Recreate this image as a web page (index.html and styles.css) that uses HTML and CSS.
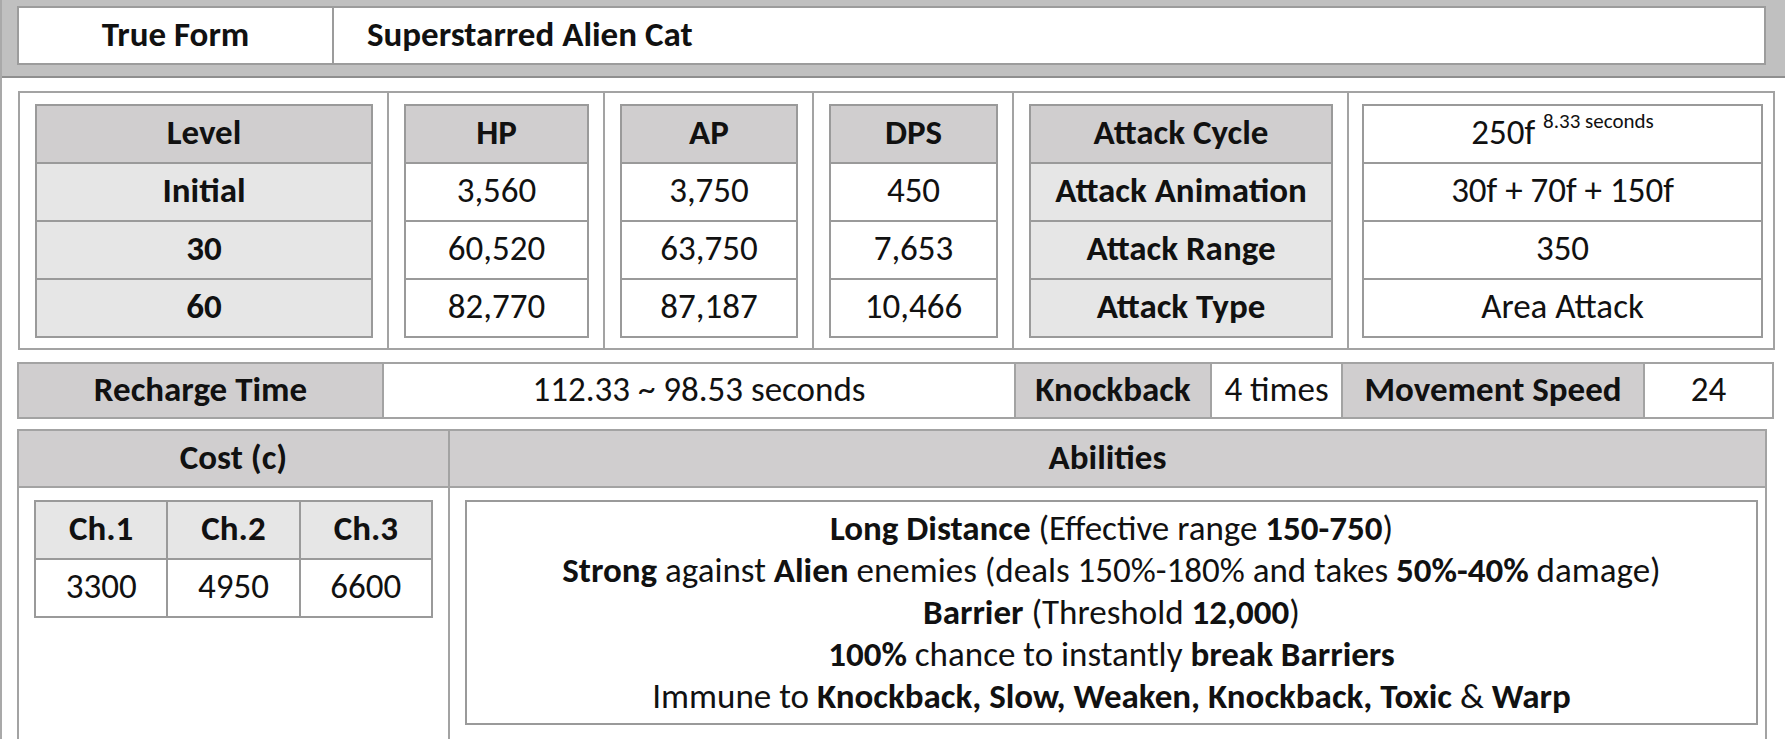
FILE: index.html
```html
<!DOCTYPE html>
<html lang="en">
<head>
<meta charset="utf-8">
<title>Superstarred Alien Cat</title>
<link rel="stylesheet" href="styles.css">
</head>
<body>
<div class="page">
  <div class="topbar">
    <div class="title-box">
      <div class="title-label">True Form</div>
      <div class="title-name">Superstarred Alien Cat</div>
    </div>
  </div>

  <div class="stats">
    <div class="stat-col c1">
      <table class="grid">
        <tr><th class="hd">Level</th></tr>
        <tr><th class="lt">Initial</th></tr>
        <tr><th class="lt">30</th></tr>
        <tr><th class="lt">60</th></tr>
      </table>
    </div>
    <div class="stat-col c2">
      <table class="grid">
        <tr><th class="hd">HP</th></tr>
        <tr><td>3,560</td></tr>
        <tr><td>60,520</td></tr>
        <tr><td>82,770</td></tr>
      </table>
    </div>
    <div class="stat-col c3">
      <table class="grid">
        <tr><th class="hd">AP</th></tr>
        <tr><td>3,750</td></tr>
        <tr><td>63,750</td></tr>
        <tr><td>87,187</td></tr>
      </table>
    </div>
    <div class="stat-col c4">
      <table class="grid">
        <tr><th class="hd">DPS</th></tr>
        <tr><td>450</td></tr>
        <tr><td>7,653</td></tr>
        <tr><td>10,466</td></tr>
      </table>
    </div>
    <div class="stat-col c5">
      <table class="grid">
        <tr><th class="hd">Attack Cycle</th></tr>
        <tr><th class="lt">Attack Animation</th></tr>
        <tr><th class="lt">Attack Range</th></tr>
        <tr><th class="lt">Attack Type</th></tr>
      </table>
    </div>
    <div class="stat-col c6">
      <table class="grid">
        <tr><td>250f <sup class="secs">8.33 seconds</sup></td></tr>
        <tr><td>30f + 70f + 150f</td></tr>
        <tr><td>350</td></tr>
        <tr><td>Area Attack</td></tr>
      </table>
    </div>
  </div>

  <table class="recharge">
    <tr>
      <th class="hd r1">Recharge Time</th>
      <td class="r2">112.33 ~ 98.53 seconds</td>
      <th class="hd r3">Knockback</th>
      <td class="r4">4 times</td>
      <th class="hd r5">Movement Speed</th>
      <td class="r6">24</td>
    </tr>
  </table>

  <table class="lower">
    <tr>
      <th class="hd cost-h">Cost (c)</th>
      <th class="hd abil-h">Abilities</th>
    </tr>
    <tr>
      <td class="cost-b">
        <table class="grid chapters">
          <tr><th class="lt">Ch.1</th><th class="lt">Ch.2</th><th class="lt">Ch.3</th></tr>
          <tr><td>3300</td><td>4950</td><td>6600</td></tr>
        </table>
      </td>
      <td class="abil-b">
        <div class="abil-box">
          <div class="line"><b>Long Distance</b> (Effective range <b>150-750</b>)</div>
          <div class="line"><b>Strong</b> against <b>Alien</b> enemies (deals 150%-180% and takes <b>50%-40%</b> damage)</div>
          <div class="line"><b>Barrier</b> (Threshold <b>12,000</b>)</div>
          <div class="line"><b>100%</b> chance to instantly <b>break Barriers</b></div>
          <div class="line">Immune to <b>Knockback, Slow, Weaken, Knockback, Toxic</b> &amp; <b>Warp</b></div>
        </div>
      </td>
    </tr>
  </table>
</div>
</body>
</html>
```

FILE: styles.css
```css
html, body {
  margin: 0;
  padding: 0;
  overflow: hidden;
  background: #ffffff;
}

body {
  font-family: Carlito, Calibri, Lato, "Liberation Sans", sans-serif;
  font-size: 35px;
  color: #111111;
  width: 1785px;
  height: 739px;
}

.page {
  border-left: 2px solid #a9a9a9;
  height: 739px;
  box-sizing: border-box;
}

/* ---------- top title bar ---------- */
.topbar {
  background: #c0c0c0;
  border-bottom: 2px solid #8f8f8f;
  padding: 6px 0 0 15px;
  box-sizing: border-box;
  height: 78px;
}

.title-box {
  width: 1749px;
  height: 59px;
  box-sizing: border-box;
  background: #ffffff;
  border: 2px solid #9c9c9c;
  display: flex;
  align-items: stretch;
}

.title-label {
  width: 313px;
  border-right: 2px solid #9c9c9c;
  display: flex;
  align-items: center;
  justify-content: center;
  font-weight: 700;
  padding-bottom: 3px;
}

.title-name {
  display: flex;
  align-items: center;
  padding-left: 33px;
  padding-bottom: 3px;
  font-weight: 700;
}

/* ---------- stats block ---------- */
.stats {
  margin: 13px 0 0 16px;
  width: 1757px;
  height: 259px;
  box-sizing: border-box;
  border: 2px solid #a3a3a3;
  display: grid;
  grid-template-columns: 367px 216px 209px 200px 335px 1fr;
}

.stat-col {
  padding: 11px 14px 0 15px;
  box-sizing: border-box;
}

.stat-col + .stat-col {
  border-left: 2px solid #a3a3a3;
}

.c6 {
  padding-left: 13px;
  padding-right: 10px;
}

table {
  border-collapse: collapse;
  font-size: inherit;
}

.grid {
  width: 100%;
  border: 2px solid #8e8e8e;
}

.grid th,
.grid td {
  height: 52px;
  padding: 0 0 4px;
  text-align: center;
  vertical-align: middle;
  border: 2px solid #9a9a9a;
  font-weight: 400;
  background: #ffffff;
  white-space: nowrap;
}

.grid th {
  font-weight: 700;
}

.hd {
  background: #d0cecf !important;
  font-weight: 700;
}

.lt {
  background: #e6e6e6 !important;
}

.secs {
  font-size: 21px;
  vertical-align: 16px;
  line-height: 0;
}

/* ---------- recharge row ---------- */
.recharge {
  margin: 12px 0 0 15px;
  width: 1757px;
  border: 2px solid #a3a3a3;
}

.recharge th,
.recharge td {
  height: 49px;
  padding: 0 0 4px;
  border: 2px solid #a3a3a3;
  text-align: center;
  vertical-align: middle;
  font-weight: 400;
  white-space: nowrap;
}

.recharge th {
  font-weight: 700;
}

.r1 { width: 363px; }
.r2 { width: 630px; }
.r3 { width: 194px; }
.r4 { width: 129px; }
.r5 { width: 300px; }

/* ---------- cost / abilities ---------- */
.lower {
  margin: 10px 0 0 15px;
  width: 1750px;
  border: 2px solid #a3a3a3;
}

.cost-h,
.abil-h {
  height: 51px;
  padding: 0 0 4px;
  border: 2px solid #a3a3a3;
  text-align: center;
  vertical-align: middle;
}

.cost-h { width: 426px; }

.cost-b,
.abil-b {
  vertical-align: top;
  border: 2px solid #a3a3a3;
  padding: 12px 15px 14px 15px;
}

.abil-b {
  padding: 12px 7px 14px 15px;
}

.chapters {
  width: 399px;
}

.chapters th,
.chapters td {
  width: 33.3%;
}

.abil-box {
  border: 2px solid #9a9a9a;
  padding: 5px 0 6px;
  text-align: center;
}

.line {
  line-height: 42px;
  height: 42px;
  white-space: nowrap;
}

.line b {
  font-weight: 700;
}
```
